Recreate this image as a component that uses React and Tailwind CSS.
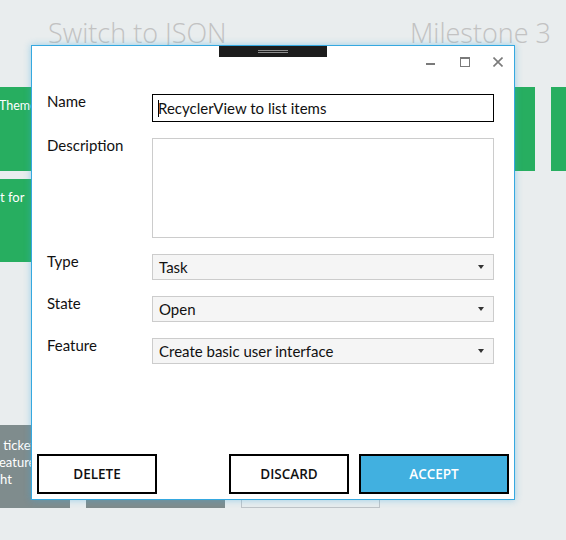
import React from "react";

function Arrow() {
  return (
    <svg width="6" height="4" viewBox="0 0 6 4" className="shrink-0">
      <path d="M0 0 H6 L3 4 Z" fill="#333" />
    </svg>
  );
}

function SelectBox({ value }) {
  return (
    <div className="h-[26px] border border-[#cccccc] bg-[#f5f5f5] flex items-center justify-between pl-[6px] pr-[9px] text-[15px] text-[#111] leading-none font-['Lato',sans-serif]">
      <span className="pt-[1px]">{value}</span>
      <Arrow />
    </div>
  );
}

function Label({ children }) {
  return <div className="text-[15px] leading-[20px] text-[#111] -mt-[3px] font-['Lato',sans-serif]">{children}</div>;
}

export default function App() {
  return (
    <div className="relative w-[566px] h-[540px] overflow-hidden bg-[#e9edee] font-['Open_Sans',sans-serif]">
      {/* background board */}
      <div className="h-[87px] flex justify-between items-start pl-[48px] pr-[15px] pt-[15px]">
        <span className="text-[27px] font-light text-[#c2c2c2] leading-[36px]">Switch to JSON</span>
        <span className="text-[27px] font-light text-[#c2c2c2] leading-[36px]">Milestone 3</span>
      </div>
      <div className="flex gap-4 -ml-[69px] h-[421px] font-['Lato',sans-serif]">
        <div className="w-[139px] shrink-0 flex flex-col">
          <div className="h-[84px] bg-[#27ae60] pl-[68px] pt-[10px] text-[12.5px] text-white leading-[17px]">Theme</div>
          <div className="h-[83px] mt-[8px] bg-[#27ae60] pl-[69px] pt-[10px] text-[13px] text-white leading-[17px]">t for</div>
          <div className="h-[83px] mt-auto bg-[#7f8c8d] pl-[69px] pt-[12px] text-[13px] text-white leading-[17px]">
            <div>&nbsp;ticket</div>
            <div className="-ml-[1px]">eature</div>
            <div>ht</div>
          </div>
        </div>
        <div className="w-[139px] shrink-0 flex flex-col">
          <div className="h-[83px] mt-auto bg-[#7f8c8d]" />
        </div>
        <div className="w-[139px] shrink-0 flex flex-col">
          <div className="h-[83px] mt-auto border border-[#bfc4c8]" />
        </div>
        <div className="w-[139px] shrink-0 flex flex-col">
          <div className="h-[84px] bg-[#27ae60]" />
        </div>
        <div className="w-[139px] shrink-0 flex flex-col">
          <div className="h-[84px] bg-[#27ae60]" />
        </div>
      </div>

      {/* dialog */}
      <div className="absolute left-[31px] top-[45px] w-[484px] h-[455px] border border-[#35a8e0] bg-white flex flex-col shadow-[0_0_7px_rgba(53,168,224,0.45)]">
        <div className="self-center w-[108px] h-[11px] bg-[#1c1c1c] flex flex-col items-center justify-center gap-[1px]">
          <div className="w-[30px] h-px bg-[#8c8c8c]" />
          <div className="w-[30px] h-px bg-[#8c8c8c]" />
        </div>
        <div className="flex justify-end items-start pr-[11px] h-[10px]">
          <svg width="10" height="10" viewBox="0 0 10 10">
            <rect x="0" y="6" width="9" height="2" fill="#7a7a7a" />
          </svg>
          <svg width="10" height="10" viewBox="0 0 10 10" className="ml-[24px]">
            <rect x="0.5" y="0.5" width="9" height="9" fill="none" stroke="#7a7a7a" strokeWidth="1" />
            <rect x="0" y="0" width="10" height="2" fill="#7a7a7a" />
          </svg>
          <svg width="10" height="10" viewBox="0 0 10 10" className="ml-[23px]">
            <path d="M0.5 0.5 L9.5 9.5 M9.5 0.5 L0.5 9.5" stroke="#7a7a7a" strokeWidth="1.6" />
          </svg>
        </div>

        <div className="mt-[27px] pl-[15px] pr-[20px] grid grid-cols-[105px_1fr] items-start">
          <Label>Name</Label>
          <div className="h-[28px] border border-black flex items-center pl-[5px] text-[15px] text-[#111] leading-none font-['Lato',sans-serif]">
            <span className="inline-block w-px h-[17px] bg-black -mr-px" />
            <span className="pt-[1px]">RecyclerView to list items</span>
          </div>

          <div className="mt-[16px]"><Label>Description</Label></div>
          <div className="mt-[16px] h-[100px] border border-[#cccccc]" />

          <div className="mt-[16px]"><Label>Type</Label></div>
          <div className="mt-[16px]"><SelectBox value="Task" /></div>

          <div className="mt-[16px]"><Label>State</Label></div>
          <div className="mt-[16px]"><SelectBox value="Open" /></div>

          <div className="mt-[16px]"><Label>Feature</Label></div>
          <div className="mt-[16px]"><SelectBox value="Create basic user interface" /></div>
        </div>

        <div className="mt-auto flex items-center pl-[5px] pr-[5px] pb-[5px]">
          <button className="w-[120px] h-[40px] border-2 border-black bg-white text-[13.5px] font-semibold text-[#111]">DELETE</button>
          <div className="flex-1" />
          <button className="w-[120px] h-[40px] border-2 border-black bg-white text-[13.5px] font-semibold text-[#111]">DISCARD</button>
          <button className="ml-[10px] w-[150px] h-[40px] border-2 border-black bg-[#41b0e0] text-[13.5px] font-semibold text-white">ACCEPT</button>
        </div>
      </div>
    </div>
  );
}
